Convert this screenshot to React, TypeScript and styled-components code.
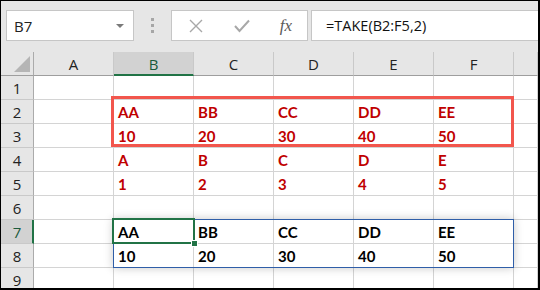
import React from "react"
import styled, { createGlobalStyle } from "styled-components"

const columns = ["A", "B", "C", "D", "E", "F", ""]

type Cell = { col: number; text: string; tone: "red" | "black" }

const rows: Cell[][] = [
  [],
  ["AA", "BB", "CC", "DD", "EE"].map((t, i) => ({ col: i + 1, text: t, tone: "red" })),
  ["10", "20", "30", "40", "50"].map((t, i) => ({ col: i + 1, text: t, tone: "red" })),
  ["A", "B", "C", "D", "E"].map((t, i) => ({ col: i + 1, text: t, tone: "red" })),
  ["1", "2", "3", "4", "5"].map((t, i) => ({ col: i + 1, text: t, tone: "red" })),
  [],
  ["AA", "BB", "CC", "DD", "EE"].map((t, i) => ({ col: i + 1, text: t, tone: "black" })),
  ["10", "20", "30", "40", "50"].map((t, i) => ({ col: i + 1, text: t, tone: "black" })),
  [],
]

const activeCol = 1
const activeRow = 7

const App = () => {
  return (
    <>
      <GlobalStyle />
      <FrameStyled>
        <ToolbarStyled>
          <NameBoxStyled>
            <span>B7</span>
            <CaretStyled />
          </NameBoxStyled>
          <GripStyled>
            <i />
            <i />
            <i />
          </GripStyled>
          <ButtonsBoxStyled>
            <IconSlot>
              <svg width="14" height="14" viewBox="0 0 14 14">
                <path d="M1 1 L13 13 M13 1 L1 13" stroke="#a8a8a8" strokeWidth="1.4" fill="none" />
              </svg>
            </IconSlot>
            <IconSlot>
              <svg width="16" height="14" viewBox="0 0 16 14">
                <path d="M1 7 L5.5 12 L15 1.5" stroke="#a8a8a8" strokeWidth="2" fill="none" />
              </svg>
            </IconSlot>
            <FxStyled>fx</FxStyled>
          </ButtonsBoxStyled>
          <FormulaBoxStyled>=TAKE(B2:F5,2)</FormulaBoxStyled>
        </ToolbarStyled>

        <SheetStyled>
          <CornerStyled>
            <TriangleStyled />
          </CornerStyled>
          {columns.map((c, i) => (
            <ColHeadStyled key={i} active={i === activeCol}>
              {c}
            </ColHeadStyled>
          ))}
          {rows.map((cells, r) => (
            <React.Fragment key={r}>
              <RowHeadStyled active={r + 1 === activeRow}>{r + 1}</RowHeadStyled>
              {columns.map((_, c) => {
                const cell = cells.find(x => x.col === c)
                return (
                  <CellStyled key={c} tone={cell ? cell.tone : "black"}>
                    {cell ? cell.text : ""}
                  </CellStyled>
                )
              })}
            </React.Fragment>
          ))}

          <SourceRangeStyled />
          <ResultRangeStyled />
          <ActiveCellStyled>
            <FillHandleStyled />
          </ActiveCellStyled>
        </SheetStyled>
      </FrameStyled>
    </>
  )
}

const GlobalStyle = createGlobalStyle`
  html, body {
    margin: 0;
    padding: 0;
    background: #fff;
  }
  * {
    box-sizing: border-box;
  }
`

const FrameStyled = styled.div`
  width: 540px;
  height: 290px;
  border-style: solid;
  border-color: #000;
  border-width: 1px 2px 2px 1px;
  overflow: hidden;
  background: #fff;
  font-family: "Open Sans", "Noto Sans", sans-serif;
`

const ToolbarStyled = styled.div`
  height: 51px;
  background: #e6e6e6;
  display: flex;
  align-items: flex-start;
  padding: 9px 0 0 5px;
`

const NameBoxStyled = styled.div`
  width: 128px;
  height: 31px;
  background: #fff;
  border: 1px solid #c6c6c6;
  display: flex;
  align-items: center;
  justify-content: space-between;
  padding: 0 9px 0 7px;
  font-size: 15px;
  color: #222;
`

const CaretStyled = styled.div`
  width: 0;
  height: 0;
  border-left: 4px solid transparent;
  border-right: 4px solid transparent;
  border-top: 4px solid #7a7a7a;
`

const GripStyled = styled.div`
  width: 37px;
  height: 31px;
  display: flex;
  flex-direction: column;
  align-items: center;
  justify-content: center;
  gap: 3px;

  i {
    display: block;
    width: 3px;
    height: 3px;
    background: #a6a6a6;
  }
`

const ButtonsBoxStyled = styled.div`
  width: 137px;
  height: 31px;
  background: #fff;
  border: 1px solid #c6c6c6;
  display: grid;
  grid-template-columns: 46px 45px 1fr;
  align-items: center;
  padding-left: 0;
`

const IconSlot = styled.div`
  display: flex;
  align-items: center;
  justify-content: center;
  padding-left: 2px;
`

const FxStyled = styled.div`
  font-family: "Liberation Serif", "DejaVu Serif", serif;
  font-style: italic;
  font-size: 17px;
  color: #5a5a5a;
  text-align: center;
  padding-left: 2px;
`

const FormulaBoxStyled = styled.div`
  flex: 1;
  height: 31px;
  margin-left: 3px;
  margin-right: -1px;
  background: #fff;
  border: 1px solid #c6c6c6;
  display: flex;
  align-items: center;
  padding-left: 14px;
  font-size: 14.5px;
  color: #111;
`

const SheetStyled = styled.div`
  position: relative;
  display: grid;
  grid-template-columns: 33px repeat(6, 80px) 1fr;
  grid-auto-rows: 24px;
`

const HeadBase = styled.div`
  background: #e6e6e6;
  display: flex;
  align-items: center;
  justify-content: center;
  font-size: 15px;
  color: #222;
`

const CornerStyled = styled(HeadBase)`
  position: relative;
  border-right: 1px solid #ababab;
  border-bottom: 1px solid #9e9e9e;
`

const TriangleStyled = styled.div`
  position: absolute;
  right: 3px;
  bottom: 3px;
  width: 0;
  height: 0;
  border-left: 16px solid transparent;
  border-bottom: 16px solid #b5b5b5;
`

type Active = { active: boolean }

const ColHeadStyled = styled(HeadBase)<Active>`
  border-right: 1px solid #c9c9c9;
  border-bottom: ${p => (p.active ? "2px solid #217346" : "1px solid #9e9e9e")};
  background: ${p => (p.active ? "#d2d2d2" : "#e6e6e6")};
  color: ${p => (p.active ? "#1c5b3c" : "#222")};
  padding-top: ${p => (p.active ? "1px" : "0")};
`

const RowHeadStyled = styled(HeadBase)<Active>`
  border-right: ${p => (p.active ? "2px solid #217346" : "1px solid #ababab")};
  border-bottom: 1px solid #c9c9c9;
  background: ${p => (p.active ? "#d2d2d2" : "#e6e6e6")};
  color: ${p => (p.active ? "#1c5b3c" : "#222")};
  padding-left: ${p => (p.active ? "1px" : "0")};
`

type Tone = { tone: "red" | "black" }

const CellStyled = styled.div<Tone>`
  border-right: 1px solid #d4d4d4;
  border-bottom: 1px solid #d4d4d4;
  font-family: Lato, "Open Sans", sans-serif;
  font-weight: 700;
  font-size: 15px;
  line-height: 24px;
  padding-left: 4px;
  color: ${p => (p.tone === "red" ? "#c00000" : "#000")};
  white-space: nowrap;
`

const SourceRangeStyled = styled.div`
  position: absolute;
  left: 110px;
  top: 44px;
  width: 403px;
  height: 51px;
  border: 3px solid #f2564d;
  pointer-events: none;
`

const ResultRangeStyled = styled.div`
  position: absolute;
  left: 112px;
  top: 167px;
  width: 401px;
  height: 49px;
  border: 1px solid #2f5ea8;
  box-shadow: 0 0 9px rgba(0, 0, 0, 0.22);
  pointer-events: none;
`

const ActiveCellStyled = styled.div`
  position: absolute;
  left: 111px;
  top: 166px;
  width: 83px;
  height: 26px;
  border: 2px solid #217346;
  pointer-events: none;
`

const FillHandleStyled = styled.div`
  position: absolute;
  right: -5px;
  bottom: -5px;
  width: 7px;
  height: 7px;
  background: #217346;
  border: 1px solid #fff;
`

export default App
